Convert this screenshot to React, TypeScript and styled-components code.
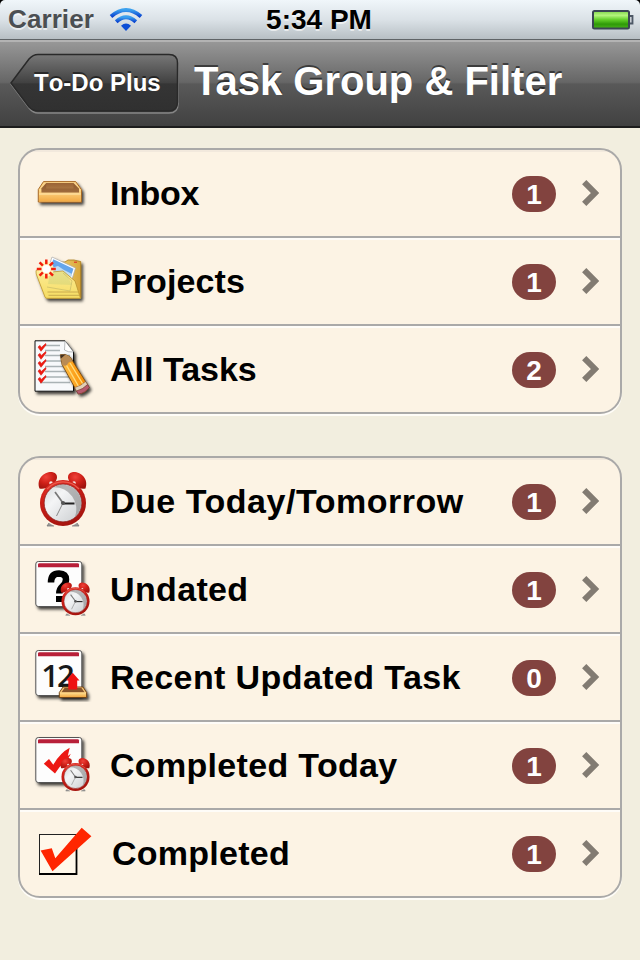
import React from "react";
import styled, { createGlobalStyle } from "styled-components";

const GlobalStyle = createGlobalStyle`
  * {
    box-sizing: border-box;
  }
  body {
    margin: 0;
    background: #f2eedf;
    font-family: "Liberation Sans", Arial, sans-serif;
  }
`;

/* ---------- icons ---------- */

const DateText = styled.text`
  fill: #16181a;
  font-family: "Open Sans", "Noto Sans", sans-serif;
  font-size: 31px;
  font-weight: 600;
  letter-spacing: -2px;
`;

const Defs = () => (
  <HiddenSvg width="0" height="0">
    <defs>
      <filter id="shadow" x="-30%" y="-30%" width="170%" height="170%">
        <feDropShadow dx="2" dy="2.5" stdDeviation="1.7" floodColor="#000" floodOpacity="0.75" />
      </filter>
      <linearGradient id="wood" x1="0" y1="0" x2="0" y2="1">
        <stop offset="0" stopColor="#ffdf93" />
        <stop offset="1" stopColor="#f2a943" />
      </linearGradient>
      <linearGradient id="woodInner" x1="0" y1="0" x2="0" y2="1">
        <stop offset="0" stopColor="#9a6335" />
        <stop offset="1" stopColor="#b4824b" />
      </linearGradient>
      <linearGradient id="folder" x1="0" y1="0" x2="0" y2="1">
        <stop offset="0" stopColor="#fff0a4" />
        <stop offset="1" stopColor="#f5dc62" />
      </linearGradient>
      <linearGradient id="folderBack" x1="0" y1="0" x2="1" y2="0">
        <stop offset="0" stopColor="#f7e28a" />
        <stop offset="1" stopColor="#d9a73a" />
      </linearGradient>
      <radialGradient id="red" cx="0.4" cy="0.3" r="0.75">
        <stop offset="0" stopColor="#f0423a" />
        <stop offset="0.5" stopColor="#cf2018" />
        <stop offset="1" stopColor="#9e120d" />
      </radialGradient>
      <linearGradient id="face" x1="0" y1="0" x2="1" y2="1">
        <stop offset="0" stopColor="#d3d6d8" />
        <stop offset="0.35" stopColor="#f4f5f6" />
        <stop offset="1" stopColor="#c9cccf" />
      </linearGradient>
      <linearGradient id="pencil" x1="0" y1="0.3" x2="1" y2="0">
        <stop offset="0" stopColor="#ffc24a" />
        <stop offset="0.5" stopColor="#fb9a12" />
        <stop offset="1" stopColor="#d97708" />
      </linearGradient>
      <linearGradient id="wifi" x1="0" y1="0" x2="0" y2="1">
        <stop offset="0" stopColor="#3aa0ee" />
        <stop offset="1" stopColor="#0b45d0" />
      </linearGradient>
      <linearGradient id="battery" x1="0" y1="0" x2="0" y2="1">
        <stop offset="0" stopColor="#7fd64a" />
        <stop offset="0.25" stopColor="#b4f57d" />
        <stop offset="0.5" stopColor="#62cf28" />
        <stop offset="0.75" stopColor="#2f9a08" />
        <stop offset="1" stopColor="#48b31c" />
      </linearGradient>
    </defs>
  </HiddenSvg>
);

const Clock = () => (
  <g>
    <path d="M-14 20 l-2 3 h7 M14 20 l2 3 h-7" fill="#999" stroke="#777" strokeWidth="0.8" />
    <path d="M-13 -20 L-8 -14 M12 -20 L8 -14" stroke="#d9d3cf" strokeWidth="3" />
    <path d="M-23.5 -14.5 C-27 -24 -19 -31.5 -11 -31 Q-5.5 -30 -6 -25 Q-7 -19.5 -13 -18 Q-18 -13 -23.5 -14.5 Z" fill="url(#red)" />
    <path d="M22.5 -14.5 C26 -24 18 -31.5 10 -31 Q4.5 -30 5 -25 Q6 -19.5 12 -18 Q17 -13 22.5 -14.5 Z" fill="url(#red)" />
    <circle cx="-12" cy="-20" r="1.8" fill="#f4e8e4" />
    <circle cx="11" cy="-20" r="1.8" fill="#f4e8e4" />
    <circle r="23" fill="url(#red)" />
    <path d="M-16 -14 A21.4 21.4 0 0 1 16 -14" fill="none" stroke="#ec5a4c" strokeWidth="1.3" />
    <circle r="18.9" fill="url(#face)" stroke="#8b1b17" strokeWidth="0.8" />
    <path d="M-9 -15.8 A18.2 18.2 0 0 1 12 13.7 A22 22 0 0 0 -9 -15.8" fill="#777" opacity="0.5" />
    <path d="M0 0 L-8 -11" stroke="#777" strokeWidth="1.7" />
    <path d="M-1 0.5 H11.5" stroke="#222" strokeWidth="1.8" />
    <path d="M0 0 L-6.5 13" stroke="#888" strokeWidth="1" />
    <circle r="2.1" fill="#555" />
  </g>
);

const CalendarPage = () => (
  <g>
    <rect x="3.8" y="15.5" width="46" height="45" rx="2.5" fill="#fdfdfd" stroke="#555" strokeWidth="1" filter="url(#shadow)" />
    <path d="M6 21.3 V18.5 Q6 17.2 7.5 17.2 H45.5 Q47 17.2 47 18.5 V21.3 Z" fill="#b81f39" />
  </g>
);

const icons = {
  inbox: (
    <g>
      <path d="M6.3 39.5 L11.5 31.6 H43.7 L49.4 39.5 V52 H6.3 Z" fill="#fbd48a" stroke="#a05c16" strokeWidth="0.9" filter="url(#shadow)" />
      <path d="M9.2 42.4 V38.5 L14.2 33 H41.5 L47 38.5 V42.4 Z" fill="url(#woodInner)" />
      <path d="M9.2 42.4 V39 L14.2 33.5 V38.5 H41.5 V33.5 L47 39 V42.4 Z" fill="#774621" opacity="0.35" />
      <path d="M7 40 L9.3 38.5 V43 H47 V38.5 L48.8 40 V51.5 H7 Z" fill="url(#wood)" />
      <path d="M7 44 H48.8" stroke="#ffe8b0" strokeWidth="1.2" />
    </g>
  ),
  projects: (
    <g>
      <g filter="url(#shadow)">
        <path d="M20 24 H33 L36 22 H42 L44 22.5 L48.7 23.5 V59.5 H15 Z" fill="url(#folderBack)" stroke="#a87b20" strokeWidth="0.8" />
        <path d="M20 19 L43.5 30 L36 54 L12 43 Z" fill="#fff" stroke="#aaa" strokeWidth="0.7" />
        <path d="M21.3 21.2 L41.5 30.7 L38.3 40.5 L18 31 Z" fill="#65a6ec" />
        <path d="M19 30 L26 28 L32 32 L40 36 L37 45 L16 38 Z" fill="#bfdcf4" />
        <path d="M4 32.5 L17 25 L19.5 34 L31 33 L43 43 L48.5 60.3 H15 Q13.5 60.3 13 59 L4.2 36 Z" fill="url(#folder)" stroke="#bb942f" strokeWidth="0.8" />
      </g>
      <path d="M18 34 L33 34 L40 47 L16 46 Z" fill="#a8c576" opacity="0.25" />
      <path d="M15 49 L38 53 L40 43 L31 35" fill="none" stroke="#cdbf69" strokeWidth="0.8" />
      <path d="M15.5 54 H46 M16.5 57.3 H47" stroke="#c4a548" strokeWidth="0.9" />
      <circle cx="14.3" cy="31" r="7.5" fill="#fff3b8" />
      <circle cx="14.3" cy="31" r="4" fill="#fff" />
      <g stroke="#f2200c" strokeWidth="2.5">
        {[0, 45, 90, 135, 180, 225, 270, 315].map((a) => (
          <path key={a} d="M14.3 26.2 V21.5" transform={`rotate(${a} 14.3 31)`} />
        ))}
      </g>
      <path d="M42 24.2 h3" stroke="#d22" strokeWidth="1" />
    </g>
  ),
  tasks: (
    <g>
      <path d="M3 14.8 H33 L41.5 26 V65.2 H3 Z" fill="#f7f9fb" stroke="#111" strokeWidth="1" filter="url(#shadow)" />
      <path d="M33 14.8 L32.5 24 Q36 26.5 41.5 26 Z" fill="#fff" stroke="#8c9094" strokeWidth="0.6" />
      {[19.5, 24.5, 29.5, 35, 40.5, 45.5, 51, 56.5].map((y) => (
        <path key={y} d={`M${y > 53 ? 8 : 13} ${y} H${y < 26 ? 28 : 38}`} stroke="#a9b2b5" strokeWidth="1.3" />
      ))}
      {[22, 30, 38, 46, 54].map((y) => (
        <path key={y} d={`M6 ${y - 1} L8 ${y - 2.6} L9.3 ${y - 0.5} L13.7 ${y - 4.5} L14 ${y - 3} L9 ${y + 3.3} Z`} fill="#f01a12" stroke="#d9150e" strokeWidth="0.6" />
      ))}
      <g filter="url(#shadow)">
        <path d="M28.3 28.8 Q33 27 38 30.8 L57.3 61.5 Q53 67 46.3 68 L30 38.5 Z" fill="url(#pencil)" stroke="#6a400f" strokeWidth="0.8" />
      </g>
      <path d="M28.3 28.8 Q33 27 38 30.8 L40.5 35.5 L37 36 L34.5 39.5 L30.6 39.8 Z" fill="#b98b54" />
      <path d="M28.3 28.8 L33.5 28.4 L29 32.5 Z" fill="#403022" />
      <path d="M34.6 39.5 L47.5 62 M38 37 L51.5 59" stroke="#ffdc7c" strokeWidth="1.4" />
      <path d="M53.5 55.5 L55.5 58.6 Q51 63.5 44.5 65 L42.7 61.6 Q49 60 53.5 55.5 Z" fill="#e1d0b6" stroke="#765040" strokeWidth="0.5" />
      <path d="M55.5 58.6 L57.3 61.5 Q53 67 46.3 68 L44.5 65 Q51 63.5 55.5 58.6 Z" fill="#b55a6d" stroke="#703040" strokeWidth="0.5" />
    </g>
  ),
  clock: (
    <g transform="translate(31 45)">
      <Clock />
    </g>
  ),
  undated: (
    <g>
      <CalendarPage />
      <path d="M19 36.5 Q19 27.5 27 27.5 Q34 27.8 34 33.5 Q34 37.5 30.3 40.5 Q27.3 43 27.3 47.5" fill="none" stroke="#000" strokeWidth="6.5" />
      <rect x="24" y="50" width="7" height="6" fill="#000" />
      <g transform="translate(43.5 55.3) scale(0.61)">
        <Clock />
      </g>
    </g>
  ),
  recent: (
    <g>
      <g transform="translate(0 1)">
        <CalendarPage />
      </g>
      <DateText x="9.3" y="52.8">12</DateText>
      <path d="M27.3 58.5 L31 53 H51 L54.6 58.5 V63.5 H27.3 Z" fill="#f8c574" stroke="#6b3c10" strokeWidth="0.9" filter="url(#shadow)" />
      <path d="M29.5 58.3 L32.5 54 H49.5 L52.5 58.3 Z" fill="#86542b" />
      <path d="M28 58.6 H54 V63 H28 Z" fill="url(#wood)" />
      <path d="M40.7 38.8 L47.5 46.6 H45.2 V55.5 H36.3 V46.6 H34 Z" fill="#ee1212" />
    </g>
  ),
  completedToday: (
    <g>
      <CalendarPage />
      <path d="M11.8 41.8 L17 37 L21.3 42.8 Q28 31 37.7 25.8 L35.8 34 L38.8 31.8 L35.5 38 Q28 43 23 51.5 Z" fill="#ec1914" />
      <g transform="translate(43.5 55) scale(0.61)">
        <Clock />
      </g>
    </g>
  ),
  completed: (
    <g>
      <rect x="7.5" y="24.5" width="37" height="39.5" fill="#fff8ea" stroke="#222" strokeWidth="1" />
      <path d="M7 64 H44.5 V25" fill="none" stroke="#000" strokeWidth="1.8" />
      <path d="M8.6 40.6 L19.8 38.2 L23.3 48.2 L49.7 17.7 L59.4 26.3 L20.5 61.2 Z" fill="#ff2600" />
    </g>
  ),
};

type IconName = keyof typeof icons;

/* ---------- list ---------- */

interface Item {
  icon: IconName;
  label: string;
  count: number;
  tracking?: number;
}

const groups: Item[][] = [
  [
    { icon: "inbox", label: "Inbox", count: 1, tracking: -0.3 },
    { icon: "projects", label: "Projects", count: 1, tracking: 0.1 },
    { icon: "tasks", label: "All Tasks", count: 2 },
  ],
  [
    { icon: "clock", label: "Due Today/Tomorrow", count: 1, tracking: 0.52 },
    { icon: "undated", label: "Undated", count: 1, tracking: 0.35 },
    { icon: "recent", label: "Recent Updated Task", count: 0, tracking: 0.4 },
    { icon: "completedToday", label: "Completed Today", count: 1, tracking: 0.32 },
    { icon: "completed", label: "Completed", count: 1, tracking: 0.25 },
  ],
];

const App = () => {
  return (
    <>
      <GlobalStyle />
      <Defs />
      <Screen>
        <StatusBar>
          <Carrier>
            Carrier
            <svg width="34" height="26" viewBox="0 0 34 26">
              <g fill="none" stroke="url(#wifi)" strokeWidth="3.9">
                <path d="M2 9.5 Q17 -3.5 32 9.5" />
                <path d="M7.2 14.8 Q17 5.8 26.8 14.8" />
              </g>
              <path d="M12 18.8 Q17 14.4 22 18.8 L17 24 Z" fill="#0d4fd6" />
            </svg>
          </Carrier>
          <Time>5:34 PM</Time>
          <Battery>
            <svg width="42" height="20" viewBox="0 0 42 20">
              <rect x="1" y="1" width="36" height="17.5" rx="1.5" fill="url(#battery)" stroke="#3b4653" strokeWidth="2" />
              <path d="M38 6 h2.5 v7.5 h-2.5" fill="#c9cfd5" stroke="#4d5866" strokeWidth="1.8" />
            </svg>
          </Battery>
        </StatusBar>
        <NavBar>
          <BackButton>
            <svg width="170" height="62" viewBox="0 0 170 62">
              <defs>
                <linearGradient id="back" x1="0" y1="0" x2="0" y2="1">
                  <stop offset="0" stopColor="#777" />
                  <stop offset="0.5" stopColor="#414141" />
                  <stop offset="0.52" stopColor="#353535" />
                  <stop offset="1" stopColor="#303030" />
                </linearGradient>
              </defs>
              <path d="M1 31 L19 7 Q23 3 28 3 H159 Q168 3 168 12 V51 Q168 60 159 60 H28 Q23 60 19 55 Z" fill="none" stroke="#858585" strokeWidth="1.5" />
              <path d="M1 30 L19 6 Q23 1.5 28 1.5 H159 Q167.5 1.5 167.5 10 V49 Q167.5 58 159 58 H28 Q23 58 19 54 Z" fill="url(#back)" stroke="#292929" strokeWidth="1.5" />
            </svg>
            <BackLabel>To-Do Plus</BackLabel>
          </BackButton>
          <Title>Task Group &amp; Filter</Title>
        </NavBar>
        <Content>
          {groups.map((items, i) => (
            <Group key={i}>
              {items.map((item) => (
                <Row key={item.label}>
                  <svg width="62" height="86" viewBox="0 0 62 86">
                    {icons[item.icon]}
                  </svg>
                  <Label $indent={item.icon === "completed"} $tracking={item.tracking ?? 0}>
                    {item.label}
                  </Label>
                  <Badge>{item.count}</Badge>
                  <svg width="20" height="28" viewBox="0 0 20 28">
                    <path d="M3.2 3.2 L14 14 L3.2 24.8" fill="none" stroke="#827b72" strokeWidth="6" />
                  </svg>
                </Row>
              ))}
            </Group>
          ))}
        </Content>
      </Screen>
    </>
  );
};

export default App;

const HiddenSvg = styled.svg`
  position: absolute;
`;
const Screen = styled.div`
  width: 640px;
  height: 960px;
  overflow: hidden;
  background: #000;
`;
const StatusBar = styled.div`
  display: grid;
  grid-template-columns: 1fr auto 1fr;
  align-items: center;
  height: 40px;
  padding: 0 6px 0 8px;
  border-bottom: 1px solid #5f6467;
  border-radius: 5px 5px 0 0;
  background: linear-gradient(#f0f6fa, #dbe2e7 50%, #b7bfc4);
  font-size: 27px;
  font-weight: bold;
  text-shadow: 0 2px 0 rgba(255, 255, 255, 0.6);
`;
const Carrier = styled.div`
  display: flex;
  align-items: center;
  gap: 15px;
  color: #4b4f52;
  font-size: 26px;
  font-weight: bold;
  letter-spacing: 0.1px;
`;
const Time = styled.div`
  margin-right: 4px;
  color: #000;
  font-size: 28px;
`;
const Battery = styled.div`
  display: flex;
  justify-content: flex-end;
`;
const NavBar = styled.div`
  display: flex;
  height: 88px;
  padding: 11px 0 0 10px;
  border-top: 2px solid #b3b3b3;
  border-bottom: 2px solid #1d1d1d;
  background: linear-gradient(#979797, #666 48%, #595959 50%, #414141);
  color: #fff;
`;
const BackButton = styled.div`
  display: grid;
  width: 170px;
  height: 62px;
  > * {
    grid-area: 1 / 1;
  }
`;
const BackLabel = styled.span`
  padding: 15px 0 0 24px;
  font-size: 24px;
  line-height: 30px;
  font-weight: bold;
  font-kerning: none;
  text-shadow: 0 -2px 0 rgba(0, 0, 0, 0.5);
  white-space: nowrap;
`;
const Title = styled.h1`
  margin: 5px 0 0 14px;
  font-size: 40px;
  line-height: 46px;
  font-weight: bold;
  text-shadow: 0 -2px 0 rgba(0, 0, 0, 0.5);
  white-space: nowrap;
`;
const Content = styled.div`
  display: flex;
  flex-direction: column;
  gap: 42px;
  height: 832px;
  padding: 20px 18px;
  background: #f2eedf;
`;
const Group = styled.div`
  border: 2px solid #aaa9a8;
  border-radius: 22px;
  overflow: hidden;
  background: #fcf3e4;
  box-shadow: 0 2px 0 #fffdf8;
`;
const Row = styled.div`
  display: flex;
  align-items: center;
  height: 88px;
  padding: 0 19px 0 12px;
  border-bottom: 2px solid #aaa9a8;
  box-shadow: inset 0 2px 0 rgba(255, 255, 255, 0.75);
  &:first-child {
    box-shadow: inset 0 2px 0 rgba(190, 180, 180, 0.15);
  }
  &:last-child {
    height: 86px;
    border-bottom: 0;
  }
`;
const Label = styled.span<{ $indent: boolean; $tracking: number }>`
  flex: 1;
  margin-left: ${(p) => (p.$indent ? 18 : 16)}px;
  color: #000;
  font-size: 34px;
  font-weight: bold;
  letter-spacing: ${(p) => p.$tracking}px;
  font-kerning: normal;
  white-space: nowrap;
`;
const Badge = styled.span`
  width: 44px;
  height: 36px;
  margin: 2px 25px 0 0;
  border-radius: 18px;
  background: #82433f;
  color: #fff;
  font-size: 28px;
  line-height: 37px;
  font-weight: bold;
  text-align: center;
`;
